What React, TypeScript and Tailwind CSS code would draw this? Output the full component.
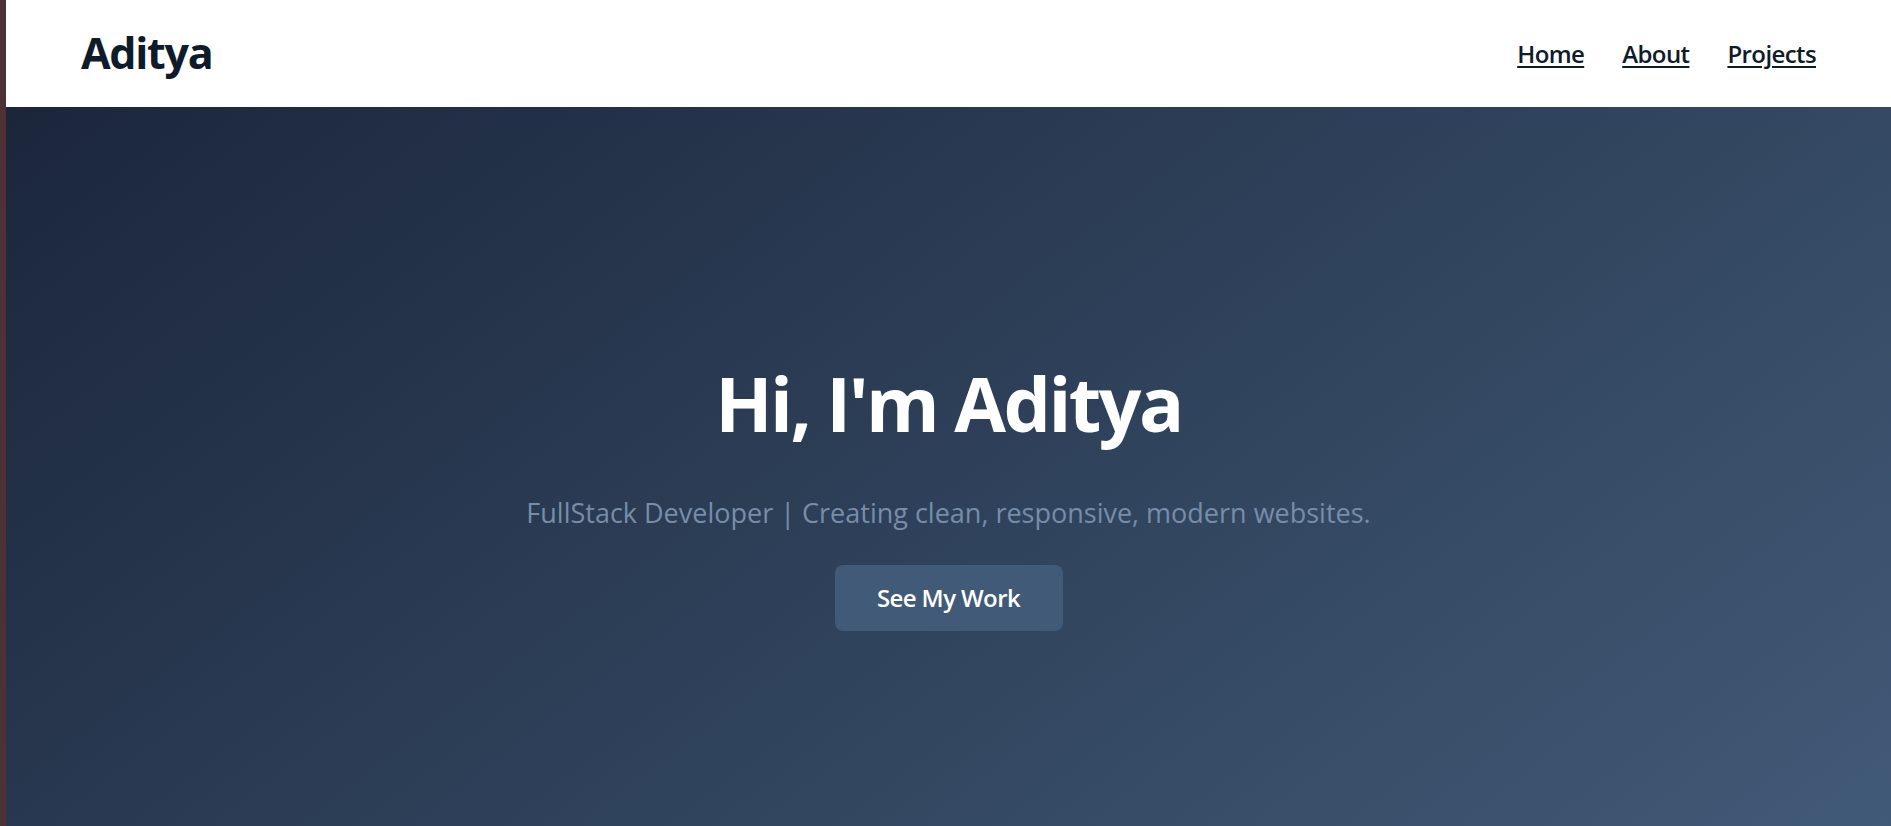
import React from "react";

export default function App() {
  return (
    <div className="flex h-[826px] w-full overflow-hidden bg-white" style={{ fontFamily: '"Open Sans", "Noto Sans", sans-serif' }}>
      <div className="w-[6px] shrink-0 bg-[#4e3136]" />
      <div className="flex min-w-0 flex-1 flex-col">
        <header className="flex h-[107px] shrink-0 items-center justify-between bg-white pl-[75px] pr-[75px]">
          <div className="text-[43px] font-bold tracking-[-1.3px] text-[#0d1b2a]">Aditya</div>
          <nav className="flex items-center gap-[38px] text-[24px] font-semibold tracking-[-0.6px] text-[#0d1b2a]">
            <a href="#" className="underline decoration-2 underline-offset-[3px]">Home</a>
            <a href="#" className="underline decoration-2 underline-offset-[3px]">About</a>
            <a href="#" className="underline decoration-2 underline-offset-[3px]">Projects</a>
          </nav>
        </header>
        <section className="flex flex-1 flex-col items-center bg-[linear-gradient(143deg,#1b263b,#415a77)] pt-[251px]">
          <h1 className="text-[75px] font-bold leading-[90px] tracking-[-2.5px] text-white">Hi, I'm Aditya</h1>
          <p className="mt-[47px] text-[27px] leading-[36px] tracking-[0px] text-[#778da9]">
            FullStack Developer | Creating clean, responsive, modern websites.
          </p>
          <button className="mt-[34px] flex h-[66px] w-[228px] items-center justify-center rounded-[8px] bg-[#415a77] text-[24px] font-semibold tracking-[-0.6px] text-white">
            See My Work
          </button>
        </section>
      </div>
    </div>
  );
}
